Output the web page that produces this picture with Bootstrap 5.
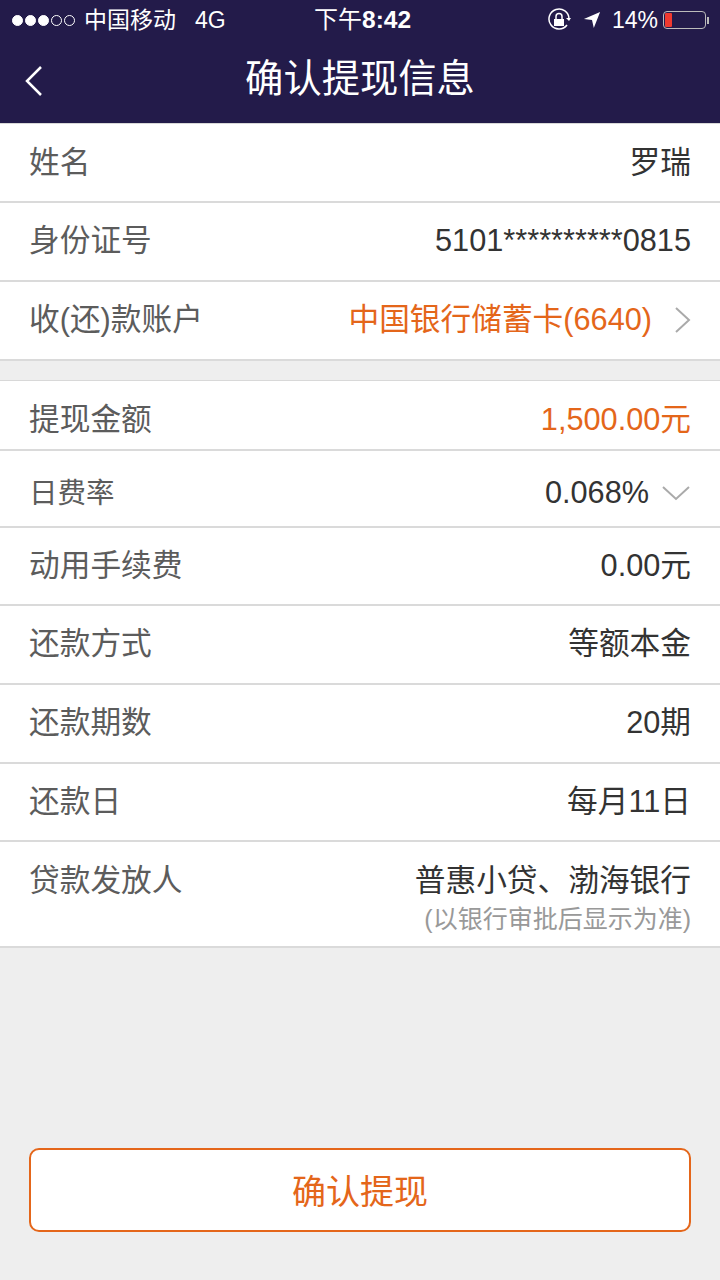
<!doctype html>
<html lang="zh-CN">
<head>
    <meta charset="UTF-8">
    <meta name="viewport" content="width=device-width, initial-scale=1.0">
    <link rel="stylesheet" href="https://cdn.jsdelivr.net/npm/bootstrap@5.3.2/dist/css/bootstrap.min.css">
    <title>确认提现信息</title>
    <style>
        body { background: #eeeeee; font-family: "Liberation Sans", "Noto Sans CJK SC", sans-serif; color: #333; height: 1280px; overflow: hidden; }
        .app-top { background: #231b4a; color: #fff; height: 123px; }
        .status-line { height: 40px; padding: 0 11px 0 12px; font-size: 23px; line-height: 40px; }
        .status-dots { gap: 2px; margin-right: 9px; }
        .status-dots i { display: block; width: 11px; height: 11px; border-radius: 50%; border: 1px solid #fff; }
        .status-dots i.on { background: #fff; }
        .status-4g { margin-left: 19px; }
        .status-time { font-size: 24px; left: 314px; top: 0; }
        .status-time b { font-weight: 700; font-size: 24.5px; }
        .status-arrow { margin-left: 12px; }
        .status-pct { margin-left: 11px; }
        .batt { width: 43px; height: 18px; border: 1px solid #bbb; border-radius: 4px; padding: 1px; margin-left: 5px; }
        .batt span { display: block; width: 7px; height: 100%; background: #f0392f; border-radius: 1px; }
        .batt-tip { width: 2px; height: 7px; background: #bbb; margin-left: 1px; }
        .title-line { height: 83px; }
        .title-line h1 { font-size: 38.3px; font-weight: 400; margin: 0; line-height: 78px; }
        .back-btn { left: 24px; top: 25px; }
        .info-list { background: #fff; border-top: 1px solid #d8d8d8; }
        .info-list .list-group-item { border: 0; border-bottom: 2px solid #dadada; border-radius: 0; padding: 0 29px; color: #333; font-size: 30.7px; }
        .info-list .list-group-item:last-child { border-bottom: 2px solid #dadada; }
        .lbl { color: #5c5c5c; }
        .lbl-small { font-size: 28.5px; }
        .val-orange { color: #e4661a; }
        .gap-strip { height: 19px; }
        .info-list .row-a { height: 79px; }
        .info-list .row-first { height: 79px; padding-top: 2px; }
        .info-list .row-amount { height: 70px; padding-top: 10px; }
        .info-list .row-rate { height: 77px; padding-top: 9px; }
        .info-list .row-fee { height: 78px; }
        .info-list .row-day { height: 78px; padding-top: 1px; }
        .info-list .row-lender { height: 106px; padding-top: 16px; }
        .sub-note { color: #999; font-size: 25px; line-height: 30px; }
        .chev-right { margin-left: 22px; }
        .chev-down { margin-left: 12px; }
        .confirm-btn { margin: 200px 29px 0; width: 662px; height: 84px; padding-top: 10px; background: #fff; border: 2px solid #e4661a; border-radius: 10px; color: #e4661a; font-size: 34px; }
    </style>
</head>
<body>

<div class="app-top">
    <div class="status-line d-flex align-items-center position-relative">
        <div class="status-dots d-flex">
            <i class="on"></i><i class="on"></i><i class="on"></i><i></i><i></i>
        </div>
        <span>中国移动</span>
        <span class="status-4g">4G</span>
        <span class="status-time position-absolute">下午<b>8:42</b></span>
        <div class="ms-auto d-flex align-items-center">
            <svg width="24" height="24" viewBox="0 0 24 24" fill="none" stroke="#fff" stroke-width="1.5">
                <path d="M20 17A10 10 0 1 1 22 11"/>
                <path d="M19 10l3 3 2-3z" fill="#fff" stroke="none"/>
                <rect x="7" y="11" width="10" height="7" fill="#fff" stroke="none"/>
                <path d="M9 11V8.5a3 3 0 0 1 6 0V11"/>
            </svg>
            <svg class="status-arrow" width="18" height="18" viewBox="0 0 20 20"><path d="M1 9L19 1l-7 18-2-9z" fill="#fff"/></svg>
            <span class="status-pct">14%</span>
            <div class="batt"><span></span></div>
            <div class="batt-tip"></div>
        </div>
    </div>
    <div class="title-line text-center position-relative">
        <svg class="back-btn position-absolute" width="20" height="32" viewBox="0 0 20 32" fill="none" stroke="#fff" stroke-width="2.5"><path d="M17 2L3 16l14 14"/></svg>
        <h1>确认提现信息</h1>
    </div>
</div>

<ul class="list-group list-group-flush info-list">
    <li class="list-group-item row-first d-flex justify-content-between align-items-center"><span class="lbl">姓名</span><span>罗瑞</span></li>
    <li class="list-group-item row-a d-flex justify-content-between align-items-center"><span class="lbl">身份证号</span><span>5101**********0815</span></li>
    <li class="list-group-item row-a d-flex justify-content-between align-items-center">
        <span class="lbl">收(还)款账户</span>
        <span class="d-flex align-items-center val-orange">中国银行储蓄卡(6640)
            <svg class="chev-right" width="17" height="28" viewBox="0 0 17 28" fill="none" stroke="#aaa" stroke-width="2"><path d="M2 2l13 12L2 26"/></svg>
        </span>
    </li>
</ul>

<div class="gap-strip"></div>

<ul class="list-group list-group-flush info-list">
    <li class="list-group-item row-amount d-flex justify-content-between align-items-center"><span class="lbl">提现金额</span><span class="val-orange">1,500.00元</span></li>
    <li class="list-group-item row-rate d-flex justify-content-between align-items-center">
        <span class="lbl lbl-small">日费率</span>
        <span class="d-flex align-items-center">0.068%
            <svg class="chev-down" width="30" height="16" viewBox="0 0 30 16" fill="none" stroke="#aaa" stroke-width="2"><path d="M2 2l13 12L28 2"/></svg>
        </span>
    </li>
    <li class="list-group-item row-fee d-flex justify-content-between align-items-center"><span class="lbl">动用手续费</span><span>0.00元</span></li>
    <li class="list-group-item row-a d-flex justify-content-between align-items-center"><span class="lbl">还款方式</span><span>等额本金</span></li>
    <li class="list-group-item row-a d-flex justify-content-between align-items-center"><span class="lbl">还款期数</span><span>20期</span></li>
    <li class="list-group-item row-day d-flex justify-content-between align-items-center"><span class="lbl">还款日</span><span>每月11日</span></li>
    <li class="list-group-item row-lender d-flex justify-content-between align-items-start">
        <span class="lbl">贷款发放人</span>
        <div class="text-end">
            <div>普惠小贷、渤海银行</div>
            <div class="sub-note">(以银行审批后显示为准)</div>
        </div>
    </li>
</ul>

<button type="button" class="btn confirm-btn d-block">确认提现</button>

<script src="https://cdn.jsdelivr.net/npm/bootstrap@5.3.2/dist/js/bootstrap.bundle.min.js"></script>
</body>
</html>
